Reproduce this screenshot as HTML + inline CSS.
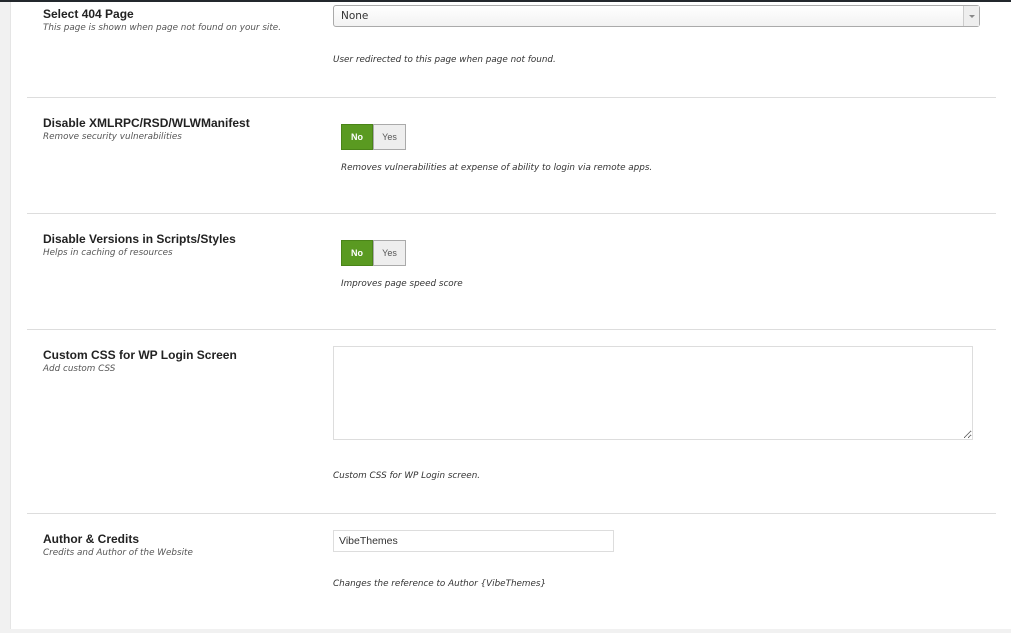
<!DOCTYPE html>
<html><head><meta charset="utf-8">
<style>
*{margin:0;padding:0;box-sizing:border-box}
body{width:1011px;height:633px;background:#f1f1f1;position:relative;overflow:hidden;font-family:"Liberation Sans",sans-serif;color:#23282d}
.top{position:absolute;left:0;top:0;width:1011px;height:2px;background:#23282d}
.panel{position:absolute;left:10px;top:2px;width:1001px;height:627px;background:#fff;border-left:1px solid #e5e5e5}
.sep{position:absolute;left:27px;width:969px;height:1px;background:#ddd}
.t{position:absolute;left:43px;font-weight:bold;font-size:12px;color:#222}
.d{position:absolute;left:43px;font-style:italic;font-size:8.8px;color:#555;font-family:"DejaVu Sans",sans-serif}
.h{position:absolute;font-style:italic;font-size:8.8px;color:#333;font-family:"DejaVu Sans",sans-serif}
.sel{position:absolute;left:333px;top:5px;width:647px;height:22px;border:1px solid #aaa;border-radius:3px;background:linear-gradient(#fff,#f2f2f2);line-height:20px;padding-left:7px;color:#333;font-family:"DejaVu Sans",sans-serif;font-size:10.5px}
.sel .ar{position:absolute;right:0;top:0;width:16px;height:20px;border-left:1px solid #ccc;background:#eee}
.sel .ar:after{content:"";position:absolute;left:5px;top:9px;border-left:3px solid transparent;border-right:3px solid transparent;border-top:3px solid #888}
.tg{position:absolute;left:341px;width:65px;height:26px;font-size:9px;font-weight:bold}
.tg .no{position:absolute;left:0;top:0;width:32px;height:26px;background:#5a9a21;border:1px solid #4a8418;color:#fff;text-align:center;line-height:24px}
.tg .yes{position:absolute;left:32px;top:0;width:33px;height:26px;background:#eee;border:1px solid #aaa;color:#555;text-align:center;line-height:24px;font-weight:normal}
textarea{position:absolute;left:333px;top:346px;width:640px;height:94px;border:1px solid #ddd;resize:both}
.inp{position:absolute;left:333px;top:530px;width:281px;height:22px;border:1px solid #ddd;font-size:10.5px;line-height:20px;padding-left:5px;color:#333}
</style></head><body>
<div class="top"></div>
<div class="panel"></div>

<div class="t" style="top:7px">Select 404 Page</div>
<div class="d" style="top:23px">This page is shown when page not found on your site.</div>
<div class="sel">None<div class="ar"></div></div>
<div class="h" style="left:333px;top:55px">User redirected to this page when page not found.</div>
<div class="sep" style="top:97px"></div>

<div class="t" style="top:116px">Disable XMLRPC/RSD/WLWManifest</div>
<div class="d" style="top:132px">Remove security vulnerabilities</div>
<div class="tg" style="top:124px"><div class="no">No</div><div class="yes">Yes</div></div>
<div class="h" style="left:341px;top:163px">Removes vulnerabilities at expense of ability to login via remote apps.</div>
<div class="sep" style="top:213px"></div>

<div class="t" style="top:232px">Disable Versions in Scripts/Styles</div>
<div class="d" style="top:248px">Helps in caching of resources</div>
<div class="tg" style="top:240px"><div class="no">No</div><div class="yes">Yes</div></div>
<div class="h" style="left:341px;top:279px">Improves page speed score</div>
<div class="sep" style="top:329px"></div>

<div class="t" style="top:348px">Custom CSS for WP Login Screen</div>
<div class="d" style="top:364px">Add custom CSS</div>
<textarea></textarea>
<div class="h" style="left:333px;top:471px">Custom CSS for WP Login screen.</div>
<div class="sep" style="top:513px"></div>

<div class="t" style="top:532px">Author &amp; Credits</div>
<div class="d" style="top:548px">Credits and Author of the Website</div>
<div class="inp">VibeThemes</div>
<div class="h" style="left:333px;top:579px">Changes the reference to Author {VibeThemes}</div>
</body></html>
